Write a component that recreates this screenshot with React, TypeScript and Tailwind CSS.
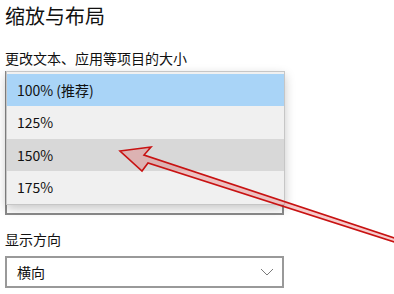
import React from "react";

const font = { fontFamily: '"Noto Sans CJK SC", "Noto Sans", sans-serif' };

export default function App() {
  return (
    <div className="relative w-[394px] h-[294px] overflow-hidden bg-white text-[#111]" style={font}>
      <div className="px-[5px]">
        <div className="mt-[2px] text-[20px] leading-[28px]">缩放与布局</div>
        <div className="mt-[18px] text-[14px] leading-[20px]">更改文本、应用等项目的大小</div>
        <div className="relative mt-[3px] w-[279px] h-[144px] border-2 border-[#8a8a8a] bg-white">
          <div className="absolute left-[-1px] top-[-2px] w-[279px] h-[134px] border border-[#c6c6c6] bg-[#f0f0f0] pt-[2px] shadow-[0_4px_10px_rgba(0,0,0,0.22)]">
            <div className="h-[32px] bg-[#a9d4f7] pl-[10px] flex items-center text-[14px]">100% (推荐)</div>
            <div className="h-[33px] pl-[10px] flex items-center text-[14px]">125%</div>
            <div className="h-[32px] bg-[#d8d8d8] pl-[10px] flex items-center text-[14px]">150%</div>
            <div className="h-[32px] pl-[10px] flex items-center text-[14px]">175%</div>
          </div>
        </div>
        <div className="mt-[14px] text-[14px] leading-[20px]">显示方向</div>
        <div className="mt-[7px] w-[279px] h-[32px] border-2 border-[#999] flex items-center justify-between pl-[10px] pr-[8px] text-[14px]">
          <span>横向</span>
          <svg width="14" height="8" viewBox="0 0 14 8">
            <polyline points="1,1 7,7 13,1" fill="none" stroke="#7a7a7a" strokeWidth="1" />
          </svg>
        </div>
      </div>
      <svg className="absolute left-0 top-0 pointer-events-none" width="394" height="294" viewBox="0 0 394 294">
        <polygon
          points="120,151 151,147 144,155 396,238.5 396,242.5 148,163 142,171"
          fill="rgba(230,110,110,0.35)"
          stroke="#c81212"
          strokeWidth="1.6"
          strokeLinejoin="miter"
        />
      </svg>
    </div>
  );
}
